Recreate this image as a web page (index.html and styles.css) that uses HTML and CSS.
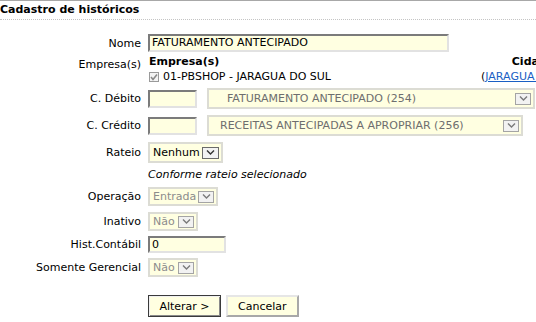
FILE: index.html
```html
<!DOCTYPE html>
<html lang="pt-BR">
<head>
  <meta charset="UTF-8">
  <title>Cadastro de históricos</title>
  <link rel="stylesheet" href="styles.css">
</head>
<body>
  <div class="titlebar">Cadastro de históricos</div>

  <div class="form">
    <div class="row">
      <label class="lbl">Nome</label>
      <span class="inp w-nome">FATURAMENTO ANTECIPADO</span>
    </div>

    <div class="row row-empresa">
      <label class="lbl lbl-top">Empresa(s)</label>
      <div class="emp">
        <div class="emp-head">Empresa(s)</div>
        <div class="emp-head emp-cidade">Cidade</div>
        <div class="emp-item">
          <svg class="chk" width="10" height="10" viewBox="0 0 10 10">
            <rect x="0.5" y="0.5" width="9" height="9" fill="#f4f4f4" stroke="#9a9a9a"/>
            <polyline points="2,5 4,7.5 8,2.5" fill="none" stroke="#8a8a8a" stroke-width="1.6"/>
          </svg>
          01-PBSHOP - JARAGUA DO SUL
        </div>
        <div class="emp-city">(<a href="#">JARAGUA DO SUL</a>)</div>
      </div>
    </div>

    <div class="row">
      <label class="lbl">C. Débito</label>
      <span class="inp w-conta"></span>
      <span class="sel sel-muted w-deb pad-deb">
        <span>FATURAMENTO ANTECIPADO (254)</span>
        <span class="sel-btn"><svg width="9" height="5" viewBox="0 0 9 5"><polyline points="1,0.5 4.5,4 8,0.5"/></svg></span>
      </span>
    </div>

    <div class="row">
      <label class="lbl">C. Crédito</label>
      <span class="inp w-conta"></span>
      <span class="sel sel-muted w-cred pad-cred">
        <span>RECEITAS ANTECIPADAS A APROPRIAR (256)</span>
        <span class="sel-btn"><svg width="9" height="5" viewBox="0 0 9 5"><polyline points="1,0.5 4.5,4 8,0.5"/></svg></span>
      </span>
    </div>

    <div class="row">
      <label class="lbl">Rateio</label>
      <span class="sel w-rateio">
        <span>Nenhum</span>
        <span class="sel-btn sel-btn-dark"><svg width="9" height="5" viewBox="0 0 9 5"><polyline points="1,0.5 4.5,4 8,0.5"/></svg></span>
      </span>
    </div>

    <div class="row row-note">
      <span class="lbl"></span>
      <em class="note">Conforme rateio selecionado</em>
    </div>

    <div class="row">
      <label class="lbl">Operação</label>
      <span class="sel sel-off w-oper">
        <span>Entrada</span>
        <span class="sel-btn"><svg width="9" height="5" viewBox="0 0 9 5"><polyline points="1,0.5 4.5,4 8,0.5"/></svg></span>
      </span>
    </div>

    <div class="row">
      <label class="lbl">Inativo</label>
      <span class="sel sel-off w-nao">
        <span>Não</span>
        <span class="sel-btn"><svg width="9" height="5" viewBox="0 0 9 5"><polyline points="1,0.5 4.5,4 8,0.5"/></svg></span>
      </span>
    </div>

    <div class="row row-tight">
      <label class="lbl">Hist.Contábil</label>
      <span class="inp inp-short w-hist">0</span>
    </div>

    <div class="row">
      <label class="lbl">Somente Gerencial</label>
      <span class="sel sel-off w-nao">
        <span>Não</span>
        <span class="sel-btn"><svg width="9" height="5" viewBox="0 0 9 5"><polyline points="1,0.5 4.5,4 8,0.5"/></svg></span>
      </span>
    </div>

    <div class="row row-buttons">
      <span class="lbl"></span>
      <button class="btn btn-default">Alterar &gt;</button>
      <button class="btn">Cancelar</button>
    </div>
  </div>
</body>
</html>
```

FILE: styles.css
```css
html, body {
  margin: 0;
  overflow: hidden;
}

body {
  font-family: "DejaVu Sans", Verdana, sans-serif;
  font-size: 11px;
  color: #000;
  background: #fff;
}

.titlebar {
  border-top: 1px solid #a8a8a8;
  border-bottom: 1px dotted #c4c4c4;
  height: 18px;
  line-height: 17px;
  font-weight: bold;
  white-space: nowrap;
}

.form {
  margin-top: 11px;
}

.row {
  display: flex;
  align-items: center;
  padding: 3px 0;
  white-space: nowrap;
}

.row-empresa {
  padding: 0;
  align-items: flex-start;
}

.row-note {
  padding: 2px 0;
  line-height: 14px;
}

.row-tight {
  padding: 2px 0;
}

.row-buttons {
  padding-top: 15px;
}

.lbl {
  width: 141px;
  margin-right: 7px;
  text-align: right;
  flex: none;
}

.lbl-top {
  padding-top: 3px;
}

/* text inputs */
.inp {
  display: inline-block;
  box-sizing: border-box;
  height: 18px;
  line-height: 14px;
  padding: 0 2px;
  border: 2px solid;
  border-color: #7b7b7b #e2e2e2 #e2e2e2 #7b7b7b;
  background: #ffffe1;
  flex: none;
}

.inp-short { height: 17px; line-height: 13px; }

.w-nome { width: 301px; }
.w-conta { width: 49px; margin-right: 10px; }
.w-hist { width: 78px; }

/* selects */
.sel {
  display: inline-flex;
  align-items: center;
  justify-content: space-between;
  box-sizing: border-box;
  height: 21px;
  padding: 0 2px 0 3px;
  border: 2px solid #dcdcd4;
  background: #ffffe1;
  flex: none;
}

.sel-muted { color: #6e6e6e; }
.sel-off { height: 19px; color: #8c8c8c; }

.sel-btn {
  display: inline-flex;
  align-items: center;
  justify-content: center;
  box-sizing: border-box;
  width: 16px;
  height: 12px;
  margin-left: 2px;
  border: 1px solid #a4a4a4;
  background: #f2f2f2;
}

.sel-btn svg polyline {
  fill: none;
  stroke: #7a7a7a;
  stroke-width: 1.4;
}

.sel-btn-dark { width: 17px; border-color: #6a6a6a; }
.sel-btn-dark svg polyline { stroke: #333; }

.w-deb { width: 328px; }
.w-cred { width: 316px; }
.pad-deb { padding-left: 18px; }
.pad-cred { padding-left: 11px; }
.w-rateio { width: 75px; }
.w-oper { width: 70px; }
.w-nao { width: 50px; }

/* empresas */
.emp {
  display: grid;
  grid-template-columns: 327px auto;
  column-gap: 6px;
}

.emp-head {
  font-weight: bold;
  line-height: 13px;
  padding-left: 1px;
}

.emp-cidade { text-align: center; }

.emp-item,
.emp-city {
  line-height: 17px;
}

.emp-item {
  display: flex;
  align-items: center;
}

.chk {
  margin: 0 4px 0 1px;
}

.emp-city a {
  color: #1a5fc4;
}

.note {
  font-style: italic;
}

/* buttons */
.btn {
  box-sizing: border-box;
  height: 22px;
  margin: 0 5px 0 0;
  padding: 0 10px;
  font: inherit;
  color: #000;
  background: #ffffe1;
  border: 2px solid;
  border-color: #e6e6e6 #a8a8a8 #a8a8a8 #e6e6e6;
}

.btn-default {
  width: 73px;
  border: 1px solid #3a3a3a;
  box-shadow: inset 1px 1px #f0f0f0, inset -1px -1px #8a8a8a;
}
```
